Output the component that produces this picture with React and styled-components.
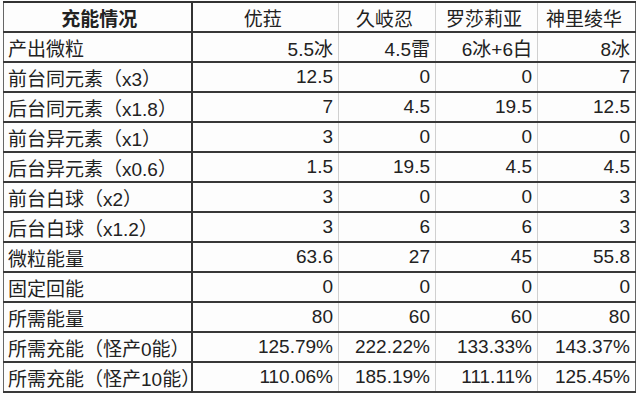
import React from "react";
import styled, { createGlobalStyle } from "styled-components";

const GlobalStyle = createGlobalStyle`
  html, body {
    margin: 0;
    padding: 0;
    background: #fdfdfd;
  }
  body {
    font-family: "Liberation Sans", "Noto Sans CJK SC", sans-serif;
    color: #222;
  }
`;

const Page = styled.div`
  padding: 1px 0 0 3px;
`;

const Sheet = styled.table`
  border-collapse: collapse;
  table-layout: fixed;
  width: 633px;
  border-top: 2px solid #333;
  border-bottom: 2px solid #333;
  border-left: 1px solid #666;
  border-right: 1px solid #666;
  font-size: 19px;
`;

const Row = styled.tr`
  height: 30px;
  border-bottom: 2px solid #383838;
`;

const Label = styled.td`
  padding: 0 0 0 4px;
  white-space: nowrap;
  overflow: visible;
  border-right: 2px solid #333;
  text-align: ${(p) => (p.$head ? "center" : "left")};
  font-weight: ${(p) => (p.$head ? "bold" : "normal")};
`;

const Cell = styled.td`
  padding: 0 5px 0 0;
  white-space: nowrap;
  border-right: 1px solid #d0d0d0;
  text-align: ${(p) => (p.$head ? "center" : "right")};
  &:last-child {
    border-right: none;
  }
`;

const widths = [188, 147, 97, 102, 98];
const heroes = ["优菈", "久岐忍", "罗莎莉亚", "神里绫华"];

const rows = [
  ["产出微粒", "5.5冰", "4.5雷", "6冰+6白", "8冰"],
  ["前台同元素（x3）", "12.5", "0", "0", "7"],
  ["后台同元素（x1.8）", "7", "4.5", "19.5", "12.5"],
  ["前台异元素（x1）", "3", "0", "0", "0"],
  ["后台异元素（x0.6）", "1.5", "19.5", "4.5", "4.5"],
  ["前台白球（x2）", "3", "0", "0", "3"],
  ["后台白球（x1.2）", "3", "6", "6", "3"],
  ["微粒能量", "63.6", "27", "45", "55.8"],
  ["固定回能", "0", "0", "0", "0"],
  ["所需能量", "80", "60", "60", "80"],
  ["所需充能（怪产0能）", "125.79%", "222.22%", "133.33%", "143.37%"],
  ["所需充能（怪产10能）", "110.06%", "185.19%", "111.11%", "125.45%"],
];

export default function App() {
  return (
    <Page>
      <GlobalStyle />
      <Sheet>
        <colgroup>
          {widths.map((w, i) => (
            <col key={i} style={{ width: w }} />
          ))}
        </colgroup>
        <tbody>
          <Row>
            <Label $head>充能情况</Label>
            {heroes.map((h) => (
              <Cell key={h} $head>
                {h}
              </Cell>
            ))}
          </Row>
          {rows.map(([name, ...vals]) => (
            <Row key={name}>
              <Label>{name}</Label>
              {vals.map((v, i) => (
                <Cell key={i}>{v}</Cell>
              ))}
            </Row>
          ))}
        </tbody>
      </Sheet>
    </Page>
  );
}
